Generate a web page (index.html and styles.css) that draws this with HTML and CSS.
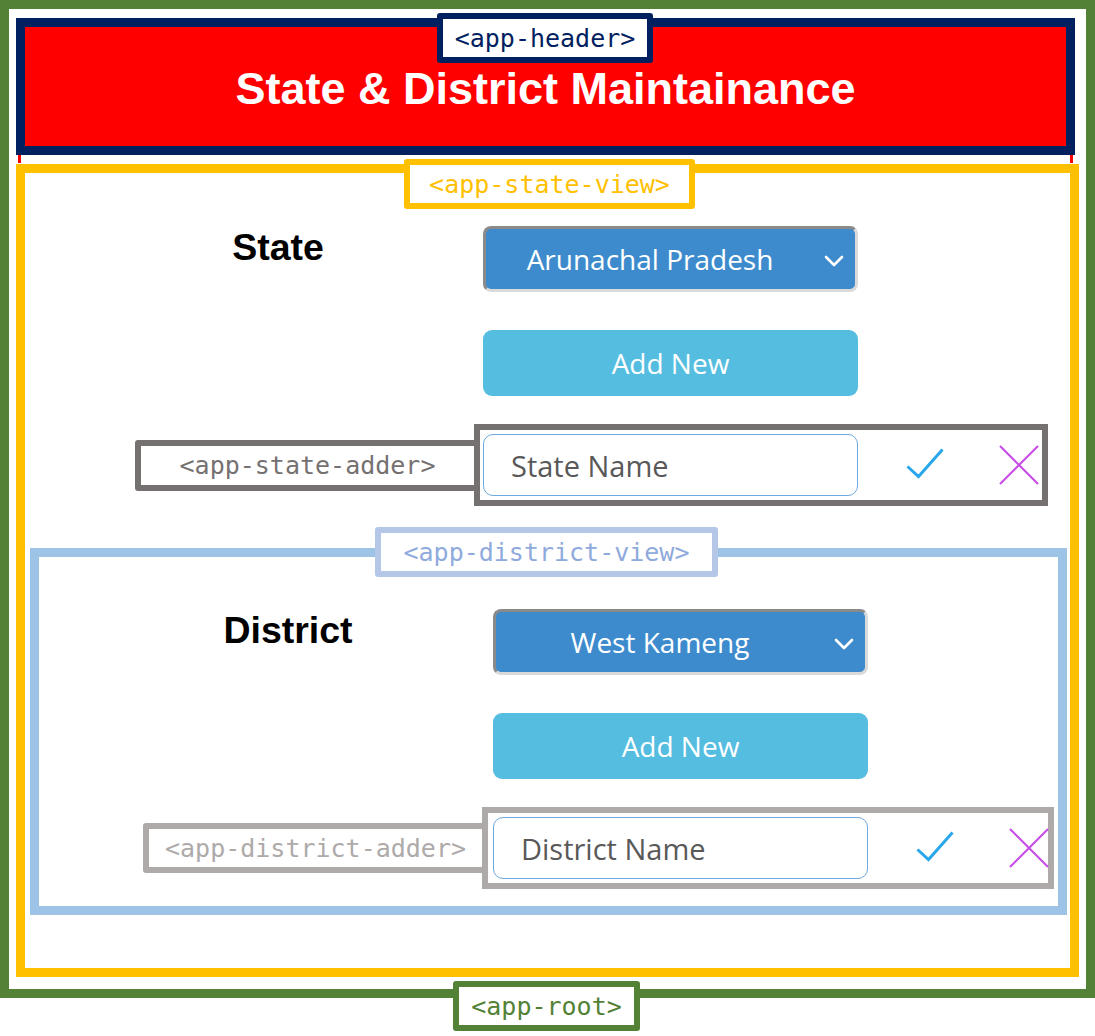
FILE: index.html
```html
<!DOCTYPE html>
<html lang="en">
<head>
<meta charset="utf-8">
<title>State &amp; District Maintainance</title>
<link rel="stylesheet" href="styles.css">
</head>
<body>
<div class="app-root">
  <span class="tag tag-root">&lt;app-root&gt;</span>

  <header class="app-header">
    <span class="tag tag-header">&lt;app-header&gt;</span>
    <h1 class="title">State &amp; District Maintainance</h1>
  </header>
  <div class="header-under"></div>

  <section class="state-view">
    <span class="tag tag-state">&lt;app-state-view&gt;</span>
    <div class="view-grid">
      <h2 class="field-label">State</h2>
      <div class="select">
        <span class="select-value">Arunachal Pradesh</span>
        <svg class="chevron" width="20" height="12" viewBox="0 0 20 12"><polyline points="2,2 10,10 18,2" fill="none" stroke="#fff" stroke-width="2.6" stroke-linecap="round" stroke-linejoin="round"/></svg>
      </div>
      <button class="btn">Add New</button>
      <div class="adder adder-state">
        <span class="tag tag-state-adder">&lt;app-state-adder&gt;</span>
        <input class="name-input" type="text" placeholder="State Name">
        <svg class="icon-check" width="38" height="34" viewBox="0 0 38 34"><polyline points="1.5,18.5 12.5,28.5 36.5,1.5" fill="none" stroke="#2aa7ea" stroke-width="3"/></svg>
        <svg class="icon-x" width="40" height="40" viewBox="0 0 40 40"><path d="M1 1 L39 39 M39 1 L1 39" fill="none" stroke="#c74fe8" stroke-width="2.2"/></svg>
      </div>
    </div>

    <section class="district-view">
      <span class="tag tag-district">&lt;app-district-view&gt;</span>
      <div class="view-grid">
        <h2 class="field-label">District</h2>
        <div class="select">
          <span class="select-value">West Kameng</span>
          <svg class="chevron" width="20" height="12" viewBox="0 0 20 12"><polyline points="2,2 10,10 18,2" fill="none" stroke="#fff" stroke-width="2.6" stroke-linecap="round" stroke-linejoin="round"/></svg>
        </div>
        <button class="btn">Add New</button>
        <div class="adder adder-district">
          <span class="tag tag-district-adder">&lt;app-district-adder&gt;</span>
          <input class="name-input" type="text" placeholder="District Name">
          <svg class="icon-check" width="38" height="34" viewBox="0 0 38 34"><polyline points="1.5,18.5 12.5,28.5 36.5,1.5" fill="none" stroke="#2aa7ea" stroke-width="3"/></svg>
          <svg class="icon-x" width="40" height="40" viewBox="0 0 40 40"><path d="M1 1 L39 39 M39 1 L1 39" fill="none" stroke="#c74fe8" stroke-width="2.2"/></svg>
        </div>
      </div>
    </section>
  </section>
</div>
</body>
</html>
```
FILE: styles.css
```css
* {
  box-sizing: border-box;
}

html,
body {
  min-height: 1036px;
}

body {
  margin: 0;
  background: #ffffff;
}

.app-root {
  position: relative;
  width: 1095px;
  height: 998px;
  border: 9px solid #538135;
}

/* annotation tags */
.tag {
  position: absolute;
  z-index: 2;
  display: flex;
  align-items: center;
  justify-content: center;
  height: 50px;
  border: 6px solid;
  border-radius: 3px;
  background: #ffffff;
  font-family: "DejaVu Sans Mono", "Liberation Mono", monospace;
  font-size: 25px;
  white-space: nowrap;
}

.tag-root {
  left: 444px;
  top: 972px;
  width: 187px;
  border-color: #538135;
  color: #538135;
}

.tag-header {
  left: 412px;
  top: -14px;
  width: 216px;
  border-color: #002060;
  color: #002060;
}

.tag-state {
  left: 379px;
  top: -14px;
  width: 291px;
  border-color: #ffc000;
  color: #ffc000;
}

.tag-district {
  left: 336px;
  top: -30px;
  width: 343px;
  border-color: #b4c7e7;
  color: #8faadc;
}

.tag-state-adder {
  right: 100%;
  top: 10px;
  width: 345px;
  height: 51px;
  border-color: #767171;
  color: #767171;
}

.tag-district-adder {
  right: 100%;
  top: 10px;
  width: 345px;
  border-color: #aeaaaa;
  color: #aeaaaa;
}

/* header */
.app-header {
  position: relative;
  margin: 9px 0 0 7px;
  width: 1059px;
  height: 137px;
  border: 9px solid #002060;
  background: #ff0000;
  display: flex;
  align-items: center;
  justify-content: center;
  padding-top: 3px;
}

.title {
  margin: 0;
  font-family: "Liberation Sans", Arial, sans-serif;
  font-weight: bold;
  font-size: 45px;
  line-height: 1;
  color: #ffffff;
}

.header-under {
  margin-left: 9px;
  width: 1055px;
  height: 8px;
  border-left: 3px solid #ff0000;
  border-right: 3px solid #ff0000;
}

/* state view */
.state-view {
  position: relative;
  margin: 1px 0 0 7px;
  width: 1063px;
  height: 813px;
  border: 9px solid #ffc000;
  padding-top: 53px;
}

.view-grid {
  display: grid;
  grid-template-columns: 400px 375px;
  column-gap: 5px;
  align-items: start;
  margin-left: 53px;
}

.field-label {
  grid-column: 1;
  margin: 0;
  text-align: center;
  font-family: "Liberation Sans", Arial, sans-serif;
  font-weight: bold;
  font-size: 37.5px;
  line-height: normal;
  color: #000000;
}

.select {
  grid-column: 2;
  display: flex;
  align-items: center;
  height: 66px;
  padding: 0 11px 0 0;
  border: 3px solid;
  border-color: #8a8a8a #dadada #dadada #8a8a8a;
  border-radius: 8px;
  background: #3d8bcd;
  color: #ffffff;
  font-family: "Open Sans", "Noto Sans", sans-serif;
  font-size: 28px;
}

.select-value {
  flex: 1;
  margin-right: 10px;
  text-align: center;
  white-space: nowrap;
}

.chevron {
  flex-shrink: 0;
  margin-top: 3px;
}

.btn {
  grid-column: 2;
  margin-top: 38px;
  height: 66px;
  border: none;
  border-radius: 9px;
  background: #55bde0;
  color: #ffffff;
  font-family: "Open Sans", "Noto Sans", sans-serif;
  font-size: 28px;
  padding: 0;
}

.adder {
  grid-column: 2;
  position: relative;
  display: flex;
  align-items: center;
  margin-top: 28px;
  border: 6px solid;
  padding: 4px 3px;
}

.adder-state {
  width: 574px;
  margin-left: -9px;
  border-color: #767171;
}

.adder-district {
  width: 572px;
  margin-left: -11px;
  padding-left: 5px;
  border-color: #aeaaaa;
}

.name-input {
  flex-shrink: 0;
  width: 375px;
  height: 62px;
  border: 1px solid #6fa8dc;
  border-radius: 10px;
  padding: 0 0 0 27px;
  background: #ffffff;
  font-family: "Open Sans", "Noto Sans", sans-serif;
  font-size: 29px;
  color: #595959;
  outline: none;
}

.name-input::placeholder {
  color: #595959;
  opacity: 1;
}

.icon-check {
  flex-shrink: 0;
  margin-left: 48px;
}

.icon-x {
  flex-shrink: 0;
  margin-left: 55px;
}

/* district view */
.district-view {
  position: relative;
  margin: 42px 3px 0 5px;
  border: 9px solid #9dc3e6;
  padding: 52px 0 17px;
}

.district-view .view-grid {
  margin-left: 49px;
}
```
